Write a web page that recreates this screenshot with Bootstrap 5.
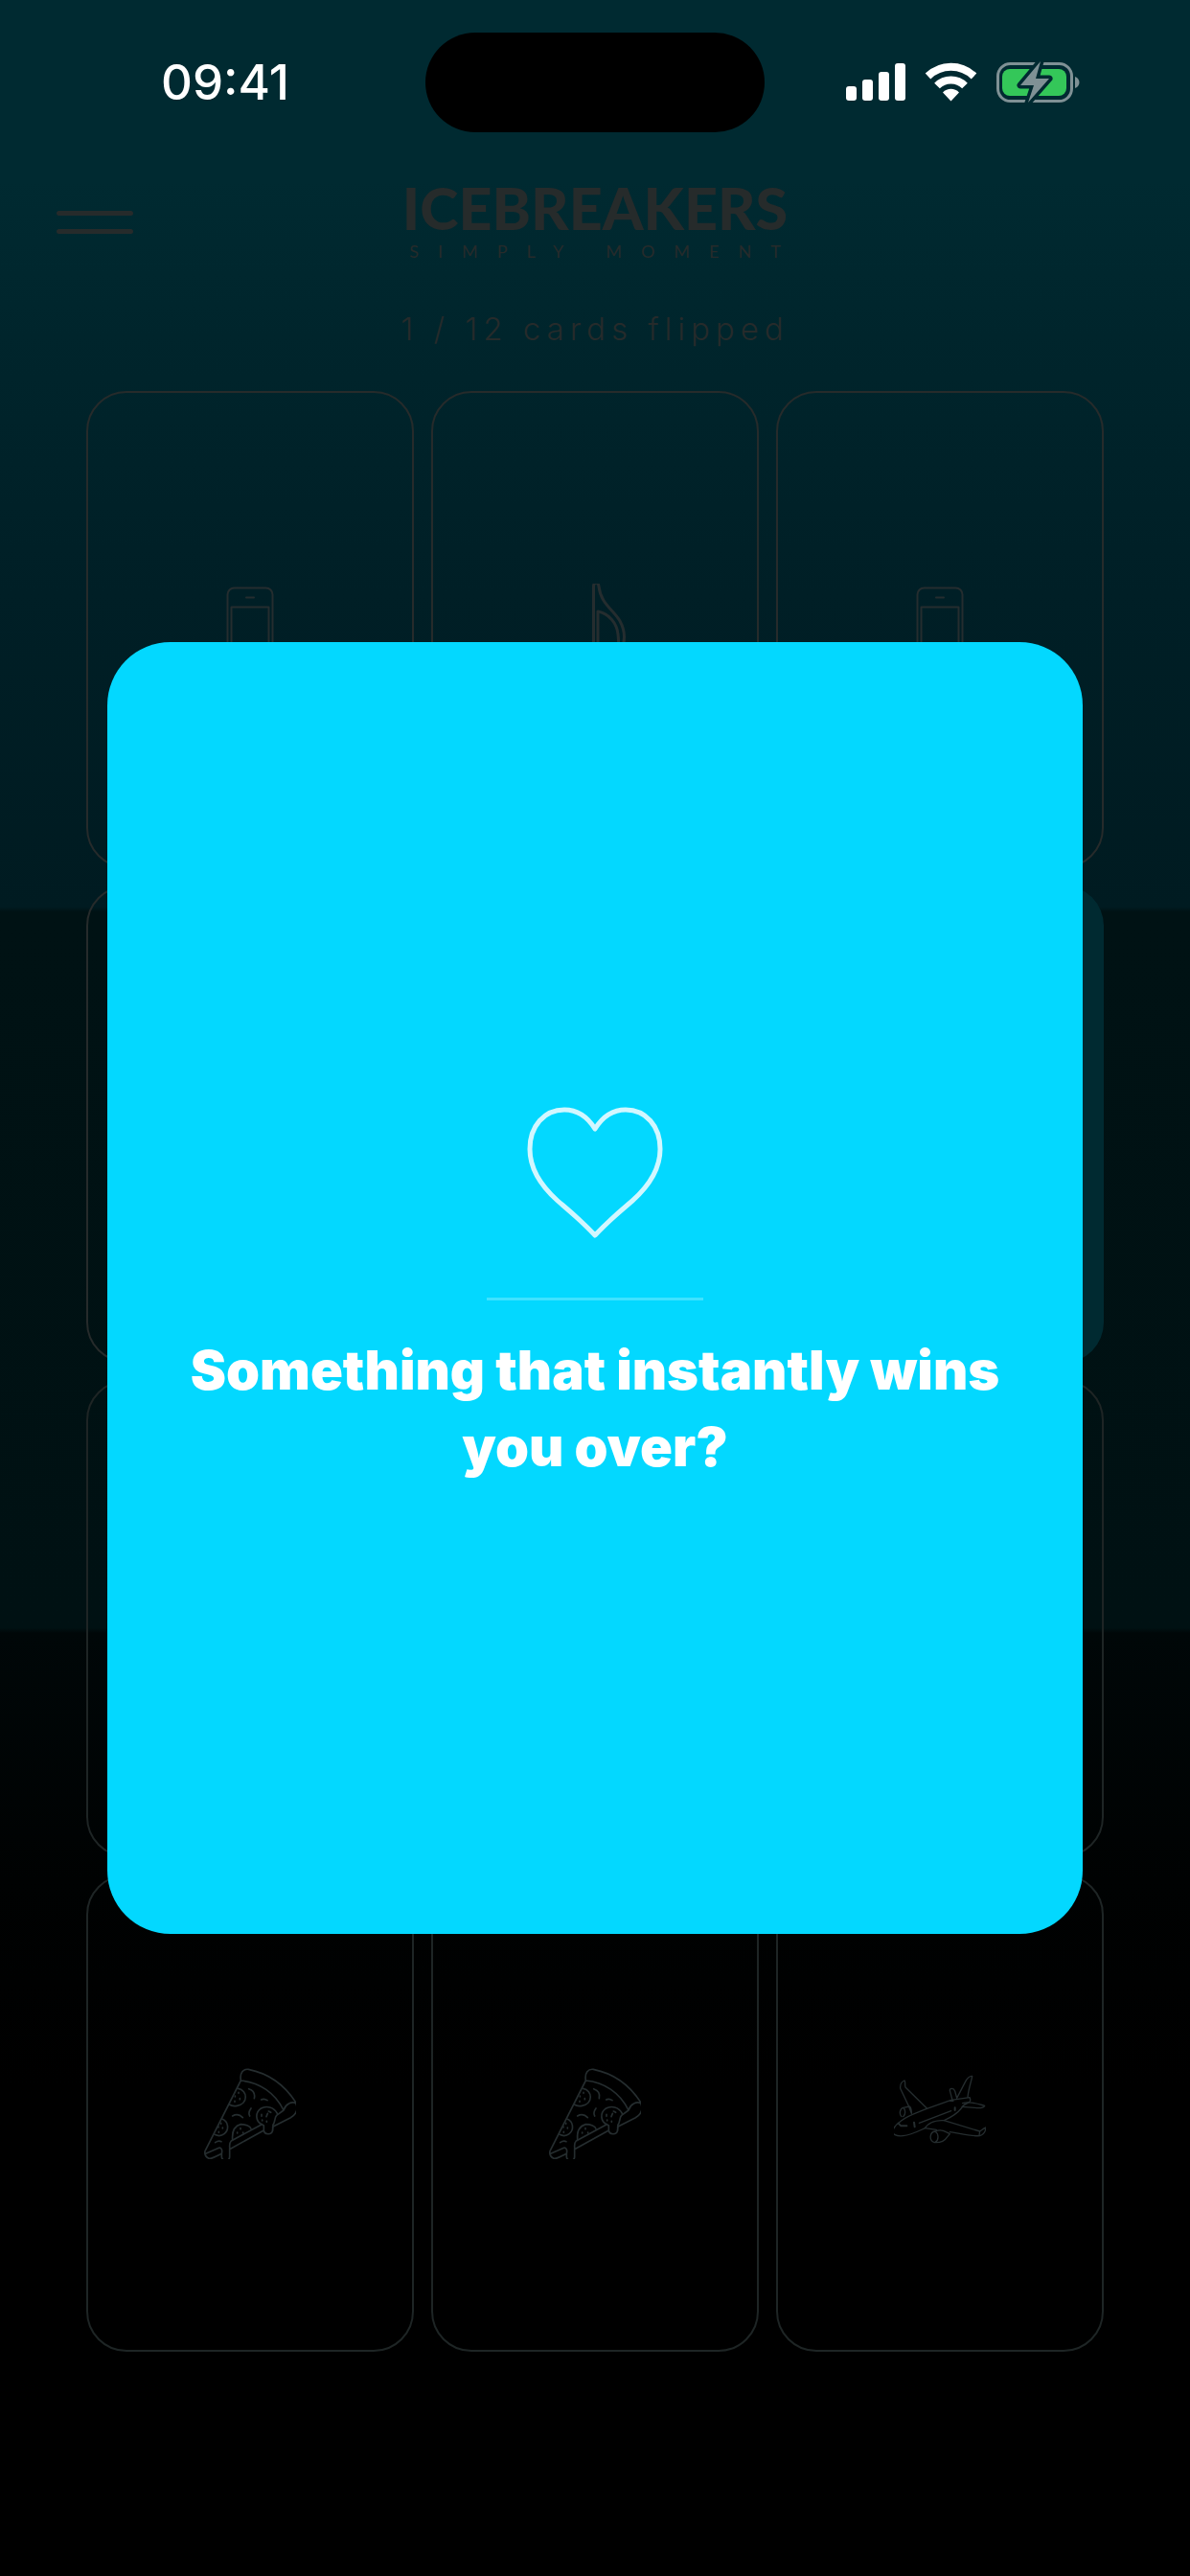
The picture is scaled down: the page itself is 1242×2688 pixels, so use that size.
<!DOCTYPE html>
<html lang="en">
<head>
<meta charset="utf-8">
<meta name="viewport" content="width=device-width, initial-scale=1">
<title>Icebreakers</title>
<link href="https://cdn.jsdelivr.net/npm/bootstrap@5.3.0/dist/css/bootstrap.min.css" rel="stylesheet">
<style>
  :root { --ink: #262b2b; --glow: #002a31; --accent: #03d8ff; }
  body {
    font-family: Inter, "Liberation Sans", sans-serif;
    color: var(--ink);
    background: #000 linear-gradient(180deg,
      var(--glow) 0%, #002a31 7%, #00252c 13%, #001f26 23%, #001b21 35.2%,
      #001214 35.4%, #001113 63.2%, #000708 63.4%, #000202 73%, #000 81%);
  }
  .status-bar { display: grid; grid-template-columns: 1fr auto 1fr; padding-top: 34px; height: 138px; color: #fff; }
  .clock { font-size: 51px; line-height: 64px; font-weight: 500; padding-left: 168px; }
  .island { width: 354px; height: 104px; background: #000; }
  .status-icons { gap: 20px; padding-right: 114px; }
  .top-bar { padding: 54px 59px 0; height: 136px; }
  .menu-btn { width: 80px; height: 80px; }
  .menu-btn span { height: 5px; border-radius: 3px; background: var(--ink); }
  .menu-btn span + span { margin-top: 14px; }
  .brand { font-family: Lato, sans-serif; color: var(--ink); }
  .brand-name { font-size: 61px; line-height: 50px; font-weight: 900; }
  .brand-tag { font-size: 18px; line-height: 24px; font-weight: 400; letter-spacing: 20px; margin-right: -20px; margin-top: 8px; }
  .progress-note { font-size: 33px; line-height: 40px; font-weight: 300; letter-spacing: 6px; padding-top: 49px; margin-bottom: 45px; }
  .deck { gap: 18px; padding: 0 90px; display: grid; grid-template-columns: repeat(3, 1fr); }
  .tile { aspect-ratio: 342 / 498; border: 2px solid var(--ink); border-radius: 42px; background: none; color: #252d2f; }
  .tile svg { width: 96px; height: 96px; overflow: visible; fill: none; stroke: currentColor; stroke-linecap: round; stroke-linejoin: round; }
  .tile-low { border-color: #1e2525; }
  .tile-open { border: 0; background: var(--glow); }
  .question { width: 82%; aspect-ratio: 1018 / 1347; border-radius: 66px; background: var(--accent); color: #fff; padding: 16px 80px 0; }
  .heart { width: 144px; height: 140px; }
  .divider { width: 226px; height: 3px; background: #40e2ff; margin: 60px 0 33px; }
  .question-text { font-size: 56px; line-height: 80px; font-weight: 900; }
</style>
<script src="https://cdn.jsdelivr.net/npm/bootstrap@5.3.0/dist/js/bootstrap.bundle.min.js"></script>
</head>
<body class="min-vh-100 position-relative">

<svg class="d-none" aria-hidden="true">
  <symbol id="phone" viewBox="0 0 96 96">
    <rect x="24.500" y="4.500" width="47" height="87" rx="7"/><path d="M28.500 82V24.500h39V82zM44 14.500h8"/>
  </symbol>
  <symbol id="note" viewBox="0 0 96 96">
    <path d="M46.500 72V3c0-5 5-5 5.500 0 2 18 15 24 22 36 6 11 6 21 1 32M51 76V29c11 2 20 12 21 24 1 8 1 12-2 18M51 76c0 16-25 17-25 5 0-9 12-15 20-10"/>
  </symbol>
  <symbol id="pizza" viewBox="99 111 288 288">
    <path d="M214 153C210 128 222 116 238 118C298 130 350 165 386 221M214 153C272 158 322 192 348 246M214 153L102 374C100 384 104 392 114 397C120 399 126 396 154 382V392C156 407 178 407 179 392V368L286 309C288 322 309 326 314 309V298L370 269C390 258 394 240 386 224C374 218 354 226 348 246L326 262C319 269 322 284 315 291C314 297 316 303 313 309M286 309V294L280 290L184 342C176 350 180 358 179 368M104 382L142 365C153 360 157 370 154 382"/>
    <path d="M206 178C236 184 238 226 202 232C192 234 184 232 178 228M155 273C176 280 178 308 162 320C152 328 140 326 132 322M188 338C186 314 192 296 214 290C230 290 244 296 246 304M280 290C260 282 258 254 276 241C294 230 318 236 328 256"/>
    <path d="M239 179C254 184 259 196 256 209M278 213Q287 208 297 215M246 240Q236 254 242 264M188 264Q206 254 220 269M134 347Q144 340 153 344M207 190v3M196 201v3M211 209v3M195 217v3M152 286v3M144 297v3M157 300v3M145 313v3M213 302v3M203 315v3M221 315v3M279 259v6M298 256l-4 10M301 249l7 4M281 276v3M295 280v3"/>
  </symbol>
  <symbol id="plane" viewBox="129 111 288 288">
    <path d="M155 277C172 263 190 258 230 242L308 214L366 206C370 214 368 220 362 222C350 226 345 232 340 240C326 258 308 268 286 278C262 276 238 284 226 302C204 312 182 324 158 326C136 328 122 322 126 308C132 290 146 284 155 277"/>
    <path d="M184 256L174 230L149 178C148 166 154 156 162 153C166 158 162 164 165 174L232 240M326 208L352 158C358 146 364 138 374 139C372 154 362 180 360 205M326 208L320 186C316 176 304 176 304 184L312 214M344 224C366 216 392 226 413 232C408 240 396 240 382 238L342 235M286 278L398 312C404 308 410 302 417 300C416 312 410 322 398 326C374 328 332 318 304 314M226 302L262 307M398 312L396 324M153 266C144 258 148 240 158 238L178 234C184 238 184 246 184 256M158 238C166 244 166 260 158 266M258 312C240 314 238 342 256 347C276 348 288 342 294 332L304 320L292 314C282 308 268 308 258 312M258 312C270 320 270 340 258 346M208 286L308 248"/>
    <path stroke-width="6" d="M143 287l8 8h18M192 284l2 14M320 238v8M306 216h8"/>
  </symbol>
</svg>

<header>
  <div class="status-bar align-items-center">
    <div class="clock">09:41</div>
    <div class="island rounded-pill"></div>
    <div class="status-icons d-flex justify-content-end align-items-center">
      <svg width="62" height="42" viewBox="0 0 62 42" fill="#fff" aria-hidden="true">
        <rect y="25" width="11" height="15" rx="3"/><rect x="17" y="18" width="11" height="22" rx="3"/><rect x="34" y="10" width="11" height="30" rx="3"/><rect x="51" y="1" width="11" height="39" rx="3"/>
      </svg>
      <svg width="55" height="42" viewBox="0 0 55 42" fill="none" stroke="#fff" aria-hidden="true">
        <path stroke-width="8" d="M3.500 14.500C17 1.500 38 1.500 51.500 14.500M13 24.500C21 16.500 34 16.500 42 24.500"/>
        <path fill="#fff" stroke="none" d="M27.500 40.500L19 31.500C23.500 26.500 31.500 26.500 36 31.500Z"/>
      </svg>
      <svg width="88" height="46" viewBox="0 0 88 46" aria-hidden="true">
        <rect x="1.500" y="3.500" width="77" height="39" rx="13" fill="none" stroke="#7f9195" stroke-width="3"/>
        <path d="M82 17c6 2 6 10 0 12z" fill="#7f9195"/>
        <rect x="6" y="9" width="67" height="28" rx="8" fill="#34c759"/>
        <path d="M46 1L25 26h14l-6 18L55 19H41z" fill="#7f9195" stroke="#002a31" stroke-width="7" stroke-linejoin="round" paint-order="stroke"/>
      </svg>
    </div>
  </div>

  <div class="top-bar d-flex align-items-start">
    <button type="button" class="menu-btn btn p-0 border-0 d-flex flex-column justify-content-center align-items-stretch" aria-label="Menu"><span></span><span></span></button>
    <div class="brand col text-center">
      <div class="brand-name">ICEBREAKERS</div>
      <div class="brand-tag text-nowrap">SIMPLY MOMENT</div>
    </div>
    <div class="menu-btn"></div>
  </div>
</header>

<main>
  <p class="progress-note text-center">1 / 12 cards flipped</p>
  <div class="deck">
    <button type="button" class="tile" aria-label="Phone"><svg stroke-width="2"><use href="#phone"/></svg></button>
    <button type="button" class="tile" aria-label="Music"><svg stroke-width="3"><use href="#note"/></svg></button>
    <button type="button" class="tile" aria-label="Phone"><svg stroke-width="2"><use href="#phone"/></svg></button>
    <button type="button" class="tile" aria-label="Card 4"></button>
    <button type="button" class="tile" aria-label="Card 5"></button>
    <button type="button" class="tile tile-open" aria-label="Card 6"></button>
    <button type="button" class="tile tile-low" aria-label="Card 7"></button>
    <button type="button" class="tile tile-low" aria-label="Card 8"></button>
    <button type="button" class="tile tile-low" aria-label="Card 9"></button>
    <button type="button" class="tile tile-low" aria-label="Pizza"><svg stroke-width="5"><use href="#pizza"/></svg></button>
    <button type="button" class="tile tile-low" aria-label="Pizza"><svg stroke-width="5"><use href="#pizza"/></svg></button>
    <button type="button" class="tile tile-low" aria-label="Travel"><svg stroke-width="4"><use href="#plane"/></svg></button>
  </div>
</main>

<div class="position-absolute top-0 start-0 w-100 h-100 d-flex justify-content-center align-items-center">
  <section class="question d-flex flex-column justify-content-center align-items-center text-center" role="dialog" aria-labelledby="question-text">
    <svg class="heart" viewBox="0 0 144 140" fill="none" stroke="#d2f7ff" stroke-width="5" stroke-linejoin="round" stroke-linecap="round" aria-hidden="true">
      <path d="M72 24C64 11 53 4 40 4C19 4 4 21 4 45C4 63 14 82 33 99C47 111 57 119 72 135C87 119 97 111 111 99C130 82 140 63 140 45C140 21 125 4 104 4C91 4 80 11 72 24Z"/>
    </svg>
    <div class="divider"></div>
    <h1 class="question-text mb-0" id="question-text">Something that instantly wins you over?</h1>
  </section>
</div>

</body>
</html>
